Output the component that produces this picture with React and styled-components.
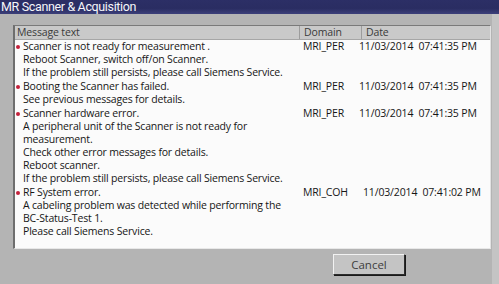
import styled, { createGlobalStyle } from "styled-components";

const GlobalStyle = createGlobalStyle`
  html, body {
    margin: 0;
    padding: 0;
    background: #b4b4b4;
  }
`;

const messages = [
  {
    lines: [
      "Scanner is not ready for measurement .",
      "Reboot Scanner, switch off/on Scanner.",
      "If the problem still persists, please call Siemens Service.",
    ],
    domain: "MRI_PER",
    date: "11/03/2014  07:41:35 PM",
  },
  {
    lines: ["Booting the Scanner has failed.", "See previous messages for details."],
    domain: "MRI_PER",
    date: "11/03/2014  07:41:35 PM",
  },
  {
    lines: [
      "Scanner hardware error.",
      "A peripheral unit of the Scanner is not ready for",
      "measurement.",
      "Check other error messages for details.",
      "Reboot scanner.",
      "If the problem still persists, please call Siemens Service.",
    ],
    domain: "MRI_PER",
    date: "11/03/2014  07:41:35 PM",
  },
  {
    lines: [
      "RF System error.",
      "A cabeling problem was detected while performing the",
      "BC-Status-Test 1.",
      "Please call Siemens Service.",
    ],
    domain: "MRI_COH",
    date: "11/03/2014  07:41:02 PM",
    dateShift: 4,
  },
];

export default function App() {
  return (
    <>
      <GlobalStyle />
      <Window>
        <TitleBar>MR Scanner &amp; Acquisition</TitleBar>
        <Body>
          <ListBox>
            <HeaderRow>
              <HeaderCell>Message text</HeaderCell>
              <HeaderCell $divider>Domain</HeaderCell>
              <HeaderCell $divider>Date</HeaderCell>
            </HeaderRow>
            {messages.map((m, i) => (
              <Row key={i}>
                <MessageCell>
                  {m.lines.map((line, j) => (
                    <Line key={j} $first={j === 0}>
                      {line}
                    </Line>
                  ))}
                </MessageCell>
                <Cell $pad={4}>{m.domain}</Cell>
                <Cell $pad={-2 + (m.dateShift || 0)}>{m.date}</Cell>
              </Row>
            ))}
          </ListBox>
          <Footer>
            <Button>Cancel</Button>
          </Footer>
        </Body>
        <EdgeStrip />
      </Window>
    </>
  );
}

const Window = styled.div`
  position: relative;
  width: 499px;
  height: 284px;
  display: flex;
  flex-direction: column;
  background: #b4b4b4;
  overflow: hidden;
  font-family: "Open Sans", "Noto Sans", sans-serif;
  color: #161616;
`;

const TitleBar = styled.div`
  height: 14px;
  flex: none;
  background: linear-gradient(180deg, #2c2f66 0%, #2a2d62 60%, #3c3f7a 100%);
  color: #f6f6fa;
  font-family: Roboto, "Liberation Sans", sans-serif;
  font-size: 12.5px;
  line-height: 14px;
  letter-spacing: -0.35px;
  padding-left: 1px;
  white-space: nowrap;
`;

const Body = styled.div`
  flex: 1;
  display: flex;
  flex-direction: column;
  padding: 11px 8px 0 13px;
`;

const ListBox = styled.div`
  height: 222px;
  background: #fbfbfb;
  border-top: 1px solid #7a7a7a;
  border-left: 2px solid #6e6e6e;
  border-right: 1px solid #e2e2e2;
  border-bottom: 1px solid #e8e8e8;
  display: flex;
  flex-direction: column;
`;

const columns = "284px 62px 1fr";

const HeaderRow = styled.div`
  display: grid;
  grid-template-columns: ${columns};
  height: 13px;
  background: #c9c9c9;
  border-bottom: 1px solid #a6a6a6;
`;

const HeaderCell = styled.div`
  font-size: 10.5px;
  line-height: 13px;
  letter-spacing: -0.15px;
  color: #3a3a3a;
  padding-left: ${(p) => (p.$divider ? "4px" : "2px")};
  border-left: ${(p) => (p.$divider ? "1px solid #9c9c9c" : "none")};
  white-space: nowrap;
`;

const Row = styled.div`
  display: grid;
  grid-template-columns: ${columns};
  padding-bottom: 1px;
  &:first-of-type {
    padding-top: 2px;
  }
`;

const MessageCell = styled.div`
  padding-left: 8px;
`;

const Line = styled.div`
  position: relative;
  font-size: 10.5px;
  line-height: 13px;
  letter-spacing: -0.18px;
  white-space: nowrap;
  &::before {
    content: "";
    display: ${(p) => (p.$first ? "block" : "none")};
    position: absolute;
    left: -7px;
    top: 5px;
    width: 4px;
    height: 4px;
    border-radius: 50%;
    background: #c2203a;
  }
`;

const Cell = styled.div`
  font-size: 10.5px;
  line-height: 13px;
  letter-spacing: -0.15px;
  padding-left: ${(p) => Math.max(p.$pad, 0)}px;
  margin-left: ${(p) => Math.min(p.$pad, 0)}px;
  white-space: pre;
`;

const Footer = styled.div`
  display: flex;
  justify-content: flex-end;
  padding: 5px 86px 0 0;
`;

const Button = styled.button`
  width: 72px;
  height: 21px;
  background: #c4c4c4;
  border: 1px solid #2c2c2c;
  border-top-color: #f2f2f2;
  border-left-color: #f2f2f2;
  box-shadow: 1px 1px 0 #1a1a1a;
  font-family: "Open Sans", "Noto Sans", sans-serif;
  font-size: 11.5px;
  color: #3e3e3e;
  padding: 0;
`;

const EdgeStrip = styled.div`
  position: absolute;
  top: 14px;
  right: 0;
  width: 7px;
  bottom: 0;
  background: #c4c4c4;
`;
